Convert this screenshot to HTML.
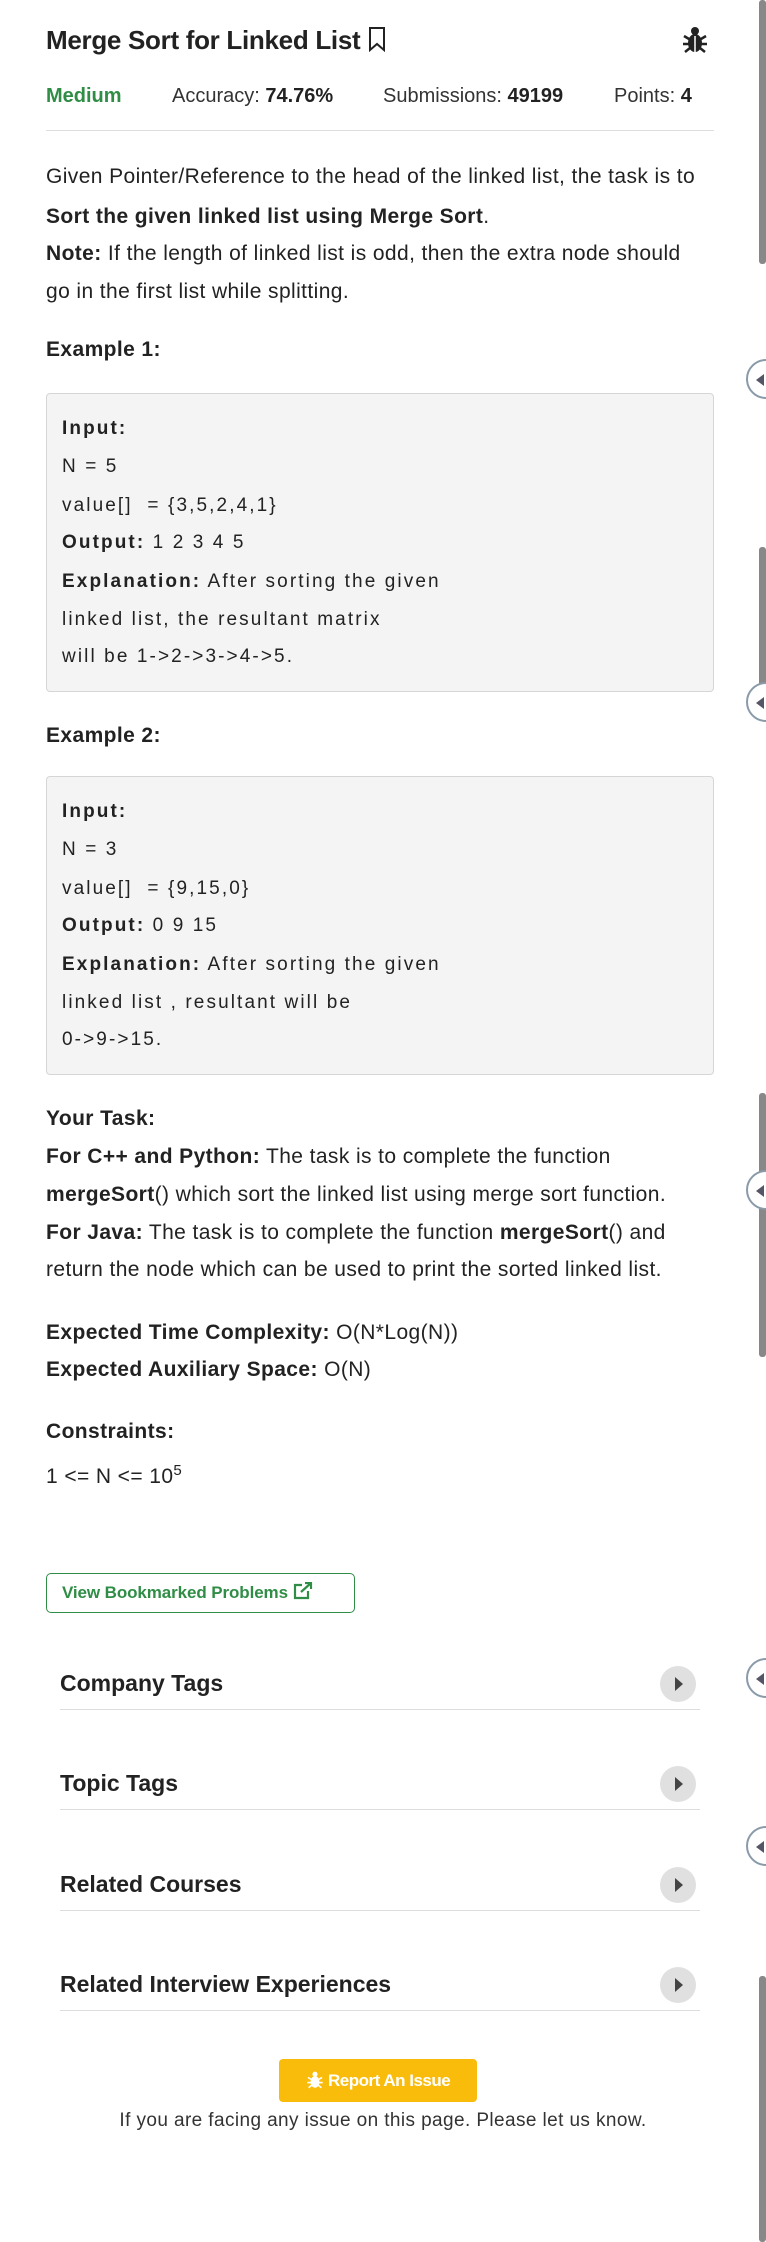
<!DOCTYPE html>
<html><head><meta charset="utf-8"><style>
*{margin:0;padding:0;box-sizing:border-box}
body{width:766px;height:2242px;position:relative;background:#fff;font-family:"Liberation Sans",sans-serif;color:#222;overflow:hidden}
.a{position:absolute;white-space:nowrap}
.t{font-size:21px;letter-spacing:0.4px;line-height:38px;left:46px}
b{font-weight:700}
.box{position:absolute;left:46px;width:668px;background:#f4f4f4;border:1px solid #d6d6d6;border-radius:4px}
.m{font-size:19px;letter-spacing:2.1px;line-height:38px;left:62px}
.tag{position:absolute;left:60px;width:640px;border-bottom:1px solid #ddd;height:44px;font-size:23px;font-weight:700;color:#222}
.tag span{position:absolute;left:0;top:4px}
.tag i{position:absolute;right:4px;top:0;width:36px;height:36px;border-radius:50%;background:#e0e0e0}
.tag i:after{content:"";position:absolute;left:15px;top:11px;border-left:8px solid #444;border-top:7px solid transparent;border-bottom:7px solid transparent}
.bar{position:absolute;left:759px;width:7px;background:#888;border-radius:3px}
.c{position:absolute;left:746px;width:40px;height:40px;border-radius:50%;border:2px solid #8a9aa8;background:#fff}
.c:after{content:"";position:absolute;left:8px;top:13px;border-right:8px solid #556;border-top:6px solid transparent;border-bottom:6px solid transparent}
</style></head><body>
<div class="a" style="left:46px;top:25px;font-size:26px;font-weight:700;color:#222;letter-spacing:-0.3px">Merge Sort for Linked List <svg width="20" height="26" viewBox="0 0 20 26" style="vertical-align:-3px"><path d="M3 2h14v22l-7-6-7 6z" fill="none" stroke="#222" stroke-width="2"/></svg></div>
<svg class="a" style="left:682px;top:26px" width="26" height="28" viewBox="0 0 26 28"><circle cx="13" cy="5" r="4" fill="#222"/><ellipse cx="13" cy="17" rx="7" ry="9" fill="#222"/><path d="M2 10l5 3M24 10l-5 3M1 18h6M25 18h-6M3 26l5-4M23 26l-5-4" stroke="#222" stroke-width="2.5"/><line x1="13" y1="10" x2="13" y2="26" stroke="#fff" stroke-width="1.5"/></svg>
<div class="a" style="left:46px;top:82px;font-size:20px;line-height:28px;letter-spacing:0px"><b style="color:#2f8d46">Medium</b></div>
<div class="a" style="left:172px;top:82px;font-size:20px;line-height:28px;letter-spacing:0px;color:#333">Accuracy: <b style="color:#222">74.76%</b></div>
<div class="a" style="left:383px;top:82px;font-size:20px;line-height:28px;letter-spacing:0px;color:#333">Submissions: <b style="color:#222">49199</b></div>
<div class="a" style="left:614px;top:82px;font-size:20px;line-height:28px;letter-spacing:0px;color:#333">Points: <b style="color:#222">4</b></div>
<div class="a" style="left:46px;top:130px;width:668px;height:1px;background:#ddd"></div>

<div class="a t" style="top:158px">Given Pointer/Reference to the head of the linked list, the task is to</div>
<div class="a t" style="top:198px"><b>Sort the given linked list using Merge Sort</b>.</div>
<div class="a t" style="top:235px"><b>Note:</b> If the length of linked list is odd, then the extra node should</div>
<div class="a t" style="top:273px">go in the first list while splitting.</div>
<div class="a t" style="top:331px"><b>Example 1:</b></div>

<div class="box" style="top:393px;height:299px"></div>
<div class="a m" style="top:410px"><b>Input:</b></div>
<div class="a m" style="top:448px">N = 5</div>
<div class="a m" style="top:487px">value[]&nbsp; = {3,5,2,4,1}</div>
<div class="a m" style="top:524px"><b>Output:</b> 1 2 3 4 5</div>
<div class="a m" style="top:563px"><b>Explanation:</b> After sorting the given</div>
<div class="a m" style="top:601px">linked list, the resultant matrix</div>
<div class="a m" style="top:638px">will be 1-&gt;2-&gt;3-&gt;4-&gt;5.</div>

<div class="a t" style="top:717px"><b>Example 2:</b></div>
<div class="box" style="top:776px;height:299px"></div>
<div class="a m" style="top:793px"><b>Input:</b></div>
<div class="a m" style="top:831px">N = 3</div>
<div class="a m" style="top:870px">value[]&nbsp; = {9,15,0}</div>
<div class="a m" style="top:907px"><b>Output:</b> 0 9 15</div>
<div class="a m" style="top:946px"><b>Explanation:</b> After sorting the given</div>
<div class="a m" style="top:984px">linked list , resultant will be</div>
<div class="a m" style="top:1021px">0-&gt;9-&gt;15.</div>

<div class="a t" style="top:1100px"><b>Your Task:</b></div>
<div class="a t" style="top:1138px"><b>For C++ and Python:</b> The task is to complete the function</div>
<div class="a t" style="top:1176px"><b>mergeSort</b>() which sort the linked list using merge sort function.</div>
<div class="a t" style="top:1214px"><b>For Java:</b> The task is to complete the function <b>mergeSort</b>() and</div>
<div class="a t" style="top:1251px">return the node which can be used to print the sorted linked list.</div>
<div class="a t" style="top:1314px"><b>Expected Time Complexity:</b> O(N*Log(N))</div>
<div class="a t" style="top:1351px"><b>Expected Auxiliary Space:</b> O(N)</div>
<div class="a t" style="top:1413px"><b>Constraints:</b></div>
<div class="a t" style="top:1452px">1 &lt;= N &lt;= 10<sup style="font-size:15px">5</sup></div>

<div class="a" style="left:46px;top:1573px;width:309px;height:40px;border:1px solid #2f8d46;border-radius:5px;color:#2f8d46;font-weight:700;font-size:17px;line-height:38px;padding-left:15px;letter-spacing:-0.1px">View Bookmarked Problems <svg width="20" height="18" viewBox="0 0 20 18" style="vertical-align:-2px"><path d="M9 3H2v13h13V9" fill="none" stroke="#2f8d46" stroke-width="2.2"/><path d="M8 10L18 1M12 1h6v6" fill="none" stroke="#2f8d46" stroke-width="2.2"/></svg></div>

<div class="tag" style="top:1666px"><span>Company Tags</span><i></i></div>
<div class="tag" style="top:1766px"><span>Topic Tags</span><i></i></div>
<div class="tag" style="top:1867px"><span>Related Courses</span><i></i></div>
<div class="tag" style="top:1967px"><span>Related Interview Experiences</span><i></i></div>

<div class="a" style="left:279px;top:2059px;width:198px;height:43px;background:#f9bc0b;border-radius:4px;color:#fff;font-weight:700;font-size:17px;line-height:43px;text-align:center;letter-spacing:-0.5px"><svg width="18" height="18" viewBox="0 0 26 28" style="vertical-align:-3px"><circle cx="13" cy="5" r="4" fill="#fff"/><ellipse cx="13" cy="17" rx="7" ry="9" fill="#fff"/><path d="M2 10l5 3M24 10l-5 3M1 18h6M25 18h-6M3 26l5-4M23 26l-5-4" stroke="#fff" stroke-width="2.5"/></svg> Report An Issue</div>
<div class="a" style="left:0;width:766px;text-align:center;top:2108px;font-size:19px;letter-spacing:0.4px;line-height:26px;color:#333">If you are facing any issue on this page. Please let us know.</div>

<div class="bar" style="top:0;height:264px"></div>
<div class="bar" style="top:547px;height:155px"></div>
<div class="bar" style="top:1093px;height:264px"></div>
<div class="bar" style="top:1976px;height:266px"></div>
<div class="c" style="top:359px"></div>
<div class="c" style="top:682px"></div>
<div class="c" style="top:1170px"></div>
<div class="c" style="top:1658px"></div>
<div class="c" style="top:1826px"></div>
</body></html>
